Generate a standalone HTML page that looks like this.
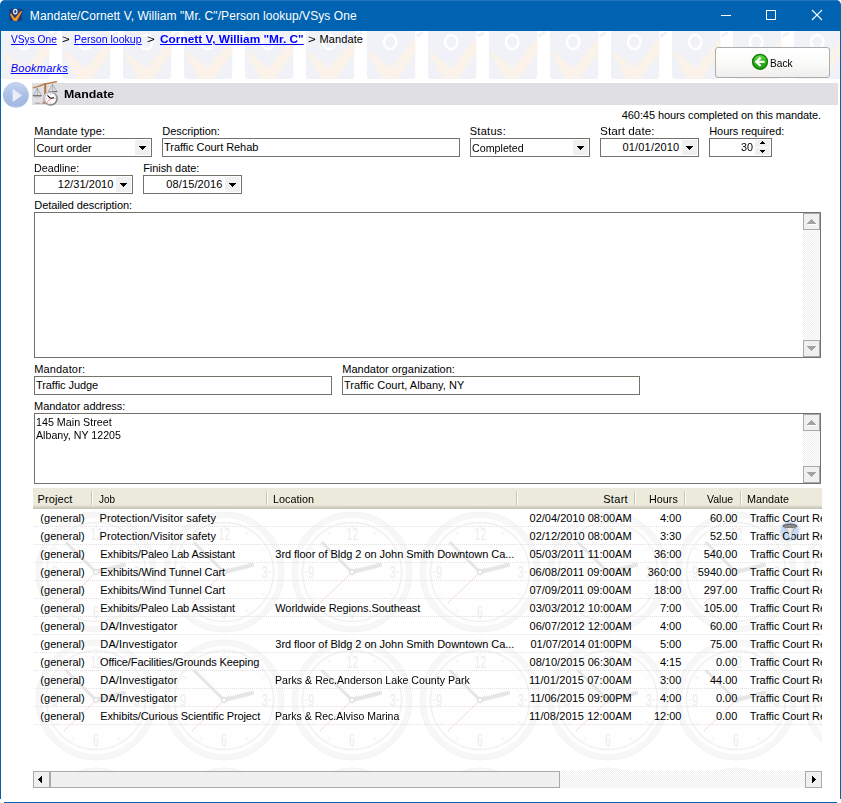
<!DOCTYPE html>
<html><head><meta charset="utf-8"><title>Mandate</title>
<style>
html,body{margin:0;padding:0;}
body{width:841px;height:803px;overflow:hidden;background:#fff;position:relative;font-family:"Liberation Sans",sans-serif;font-size:11px;color:#000;}
.a{position:absolute;}
.t{position:absolute;white-space:pre;line-height:13px;}
.box{position:absolute;box-sizing:border-box;border:1px solid #74736a;background:#fff;}
.dd{position:absolute;width:15px;height:15px;background:#f0f0f0;}
.dd i,.ar{position:absolute;display:block;background:#000;height:1px;}
.sb{position:absolute;box-sizing:border-box;width:17px;height:17px;background:#f0f0f0;border:1px solid #a9a9a9;}
.trk{position:absolute;background:repeating-conic-gradient(#efefef 0% 25%,#fff 0% 50%) 0 0/2px 2px;}
.hsep{position:absolute;top:491px;width:1px;height:14px;background:#c7c5b2;border-right:1px solid #fff;}
</style></head>
<body>
<!-- watermark band -->
<div class="a" id="wm" style="left:1px;top:31px;width:839px;height:49px;overflow:hidden;">
<svg width="839" height="49">
<defs><pattern id="vt" width="61" height="49" patternUnits="userSpaceOnUse">
<rect x="0" y="-6" width="48.3" height="53.9" rx="3.5" fill="#f0f2f7"/>
<path d="M2 19.5 L23.6 37 L46.5 9 L48.3 9.5 L48.3 22 L29.8 48 L15.7 48 L2.3 25 Z" fill="#fbf3e9"/>
<ellipse cx="23.2" cy="11" rx="6.2" ry="7.1" stroke="#fff" stroke-width="2.5" fill="none"/>
<path d="M49.5 5.2 L56 1.4" stroke="#eff1f6" stroke-width="3"/>
</pattern></defs>
<rect width="839" height="49" fill="url(#vt)"/>
</svg>
</div>
<!-- title bar -->
<div class="a" style="left:0;top:0;width:841px;height:31px;background:#0063b1;border-radius:5px 5px 0 0;"></div>
<div class="a" style="left:4px;top:0;width:833px;height:1px;background:#2273bb;"></div>
<svg class="a" style="left:8px;top:7px" width="18" height="16" viewBox="0 0 18 16">
<rect x="1.3" y="1.8" width="12.8" height="12.2" rx="1" fill="#1f3b78"/>
<path d="M13.8 4.6 L16.8 1.3" stroke="#22407c" stroke-width="0.9"/>
<path d="M1.8 7.3 L3.3 6.6 L6.9 11.2 L12.9 4 L14.2 4.3 L8.8 14 L5.7 14 Z" fill="#f7941d"/>
<ellipse cx="7.3" cy="4.6" rx="1.75" ry="2.3" fill="#2a3f74" stroke="#f2f2f7" stroke-width="1.15"/>
</svg>
<div class="a" style="left:721px;top:15px;width:10px;height:1px;background:#fff;"></div>
<div class="a" style="left:766px;top:10px;width:10px;height:10px;box-sizing:border-box;border:1px solid #fff;"></div>
<svg class="a" style="left:811px;top:9px" width="12" height="12" viewBox="0 0 12 12"><path d="M1 1 L11 11 M11 1 L1 11" stroke="#fff" stroke-width="1.1" fill="none"/></svg>
<!-- window borders -->
<div class="a" style="left:0;top:31px;width:1px;height:768px;background:#0063b1;"></div>
<div class="a" style="left:840px;top:31px;width:1px;height:768px;background:#0063b1;"></div>
<div class="a" style="left:4px;top:802px;width:833px;height:1px;background:#0063b1;"></div>

<!-- back button -->
<div class="a" style="left:715px;top:47px;width:115px;height:31px;box-sizing:border-box;border:1px solid #adadad;border-radius:3px;background:linear-gradient(#ffffff 0%,#fbfbfa 50%,#efeeec 100%);"></div>
<svg class="a" style="left:751px;top:53px" width="18" height="18" viewBox="0 0 18 18">
<defs><linearGradient id="gg" x1="0" y1="0" x2="0" y2="1"><stop offset="0" stop-color="#74da52"/><stop offset="0.45" stop-color="#31b41d"/><stop offset="1" stop-color="#1d9c10"/></linearGradient></defs>
<circle cx="9" cy="8.8" r="7.4" fill="url(#gg)" stroke="#17820f" stroke-width="1.5"/>
<path d="M9.6 4.6 L5.2 8.8 L9.6 13" fill="none" stroke="#fff" stroke-width="2.3" stroke-linejoin="miter"/>
<path d="M6 8.8 L13.6 8.8" stroke="#fff" stroke-width="2.2"/>
</svg>

<!-- section header -->
<div class="a" style="left:32px;top:83px;width:806px;height:22px;background:#e0dfe3;"></div>
<svg class="a" style="left:2px;top:81px" width="28" height="28" viewBox="0 0 28 28">
<defs><linearGradient id="pg" x1="0" y1="0" x2="0" y2="1"><stop offset="0" stop-color="#c6d4ef"/><stop offset="0.55" stop-color="#a9bee5"/><stop offset="0.9" stop-color="#a3b9e3"/><stop offset="1" stop-color="#c4d3ee"/></linearGradient>
<filter id="bl" x="-20%" y="-20%" width="140%" height="140%"><feGaussianBlur stdDeviation="0.45"/></filter></defs>
<circle cx="13.9" cy="14" r="12.9" fill="url(#pg)"/>
<path d="M11 8.6 L19.6 14.5 L11 20.4 Z" fill="#e8edf8" stroke="#e8edf8" stroke-width="0.8" stroke-linejoin="round" filter="url(#bl)"/>
</svg>
<!-- scales icon -->
<svg class="a" style="left:32px;top:80px" width="28" height="28" viewBox="0 0 28 28">
<defs><linearGradient id="rim" x1="0" y1="0" x2="1" y2="1"><stop offset="0" stop-color="#d9d9de"/><stop offset="1" stop-color="#77777d"/></linearGradient></defs>
<ellipse cx="6" cy="23.2" rx="3.6" ry="0.8" fill="#aeadb3"/>
<path d="M1.5 7.7 C5 7 9 5.5 13 3.9 C17 3 20.5 2.7 24.4 1.7" stroke="#b9804d" stroke-width="1.5" fill="none" stroke-linecap="round"/>
<path d="M13.2 3.4 L13.2 15.5" stroke="#b57743" stroke-width="2.1" fill="none"/>
<path d="M12.5 15 L12.3 22.8" stroke="#b57743" stroke-width="1.5" fill="none"/>
<path d="M10.4 23.1 L14 23.1" stroke="#a8652f" stroke-width="1.2"/>
<path d="M5.3 8 L1.3 15.5 M5.3 8 L9.3 15.5 M5.3 8 L5.3 15.4" stroke="#8a8a8e" stroke-width="0.55" fill="none"/>
<path d="M0.9 15.7 L9.7 15.7" stroke="#55555a" stroke-width="0.9"/>
<path d="M1.8 16.4 Q5.3 17.6 8.8 16.4" stroke="#8a8a8e" stroke-width="0.6" fill="none"/>
<path d="M20.6 4.4 L16.5 11.4 M20.6 4.4 L24.9 11.4 M20.6 4.4 L20.6 11.2" stroke="#8a8a8e" stroke-width="0.55" fill="none"/>
<path d="M16.1 11.6 L25.4 11.6" stroke="#55555a" stroke-width="0.9"/>
<circle cx="18.6" cy="18.5" r="6.4" fill="#fff" stroke="url(#rim)" stroke-width="1.8"/>
<path d="M18.6 13.6 v1 M18.6 22.4 v1 M13.7 18.5 h1 M22.5 18.5 h1" stroke="#d9534f" stroke-width="0.7"/>
<path d="M18.6 18.5 L15.4 15.4" stroke="#111" stroke-width="1.1" fill="none"/>
<path d="M18.6 18.5 L21.9 17.6" stroke="#111" stroke-width="1.1" fill="none"/>
<path d="M19.4 17.7 L14.9 22.7" stroke="#e8413a" stroke-width="0.7"/>
</svg>

<!-- row 1 fields -->
<div class="box" style="left:34px;top:138px;width:118px;height:19px;"><div class="dd" style="left:100px;top:1px"><i style="left:4px;top:6px;width:7px"></i><i style="left:5px;top:7px;width:5px"></i><i style="left:6px;top:8px;width:3px"></i><i style="left:7px;top:9px;width:1px"></i></div></div>
<div class="box" style="left:162px;top:138px;width:298px;height:19px;"></div>
<div class="box" style="left:470px;top:138px;width:120px;height:19px;"><div class="dd" style="left:102px;top:1px"><i style="left:4px;top:6px;width:7px"></i><i style="left:5px;top:7px;width:5px"></i><i style="left:6px;top:8px;width:3px"></i><i style="left:7px;top:9px;width:1px"></i></div></div>
<div class="box" style="left:600px;top:138px;width:99px;height:19px;"><div class="dd" style="left:81px;top:1px"><i style="left:4px;top:6px;width:7px"></i><i style="left:5px;top:7px;width:5px"></i><i style="left:6px;top:8px;width:3px"></i><i style="left:7px;top:9px;width:1px"></i></div></div>
<div class="box" style="left:709px;top:138px;width:63px;height:19px;">
 <div class="a" style="left:45px;top:1px;width:15px;height:7px;background:#f0f0f0"></div>
 <div class="a" style="left:45px;top:9px;width:15px;height:7px;background:#f0f0f0"></div>
 <i class="ar" style="left:52px;top:2px;width:1px;background:#000"></i><i class="ar" style="left:51px;top:3px;width:3px;background:#000"></i><i class="ar" style="left:50px;top:4px;width:5px;background:#000"></i><i class="ar" style="left:50px;top:11px;width:5px;background:#000"></i><i class="ar" style="left:51px;top:12px;width:3px;background:#000"></i><i class="ar" style="left:52px;top:13px;width:1px;background:#000"></i>
</div>
<!-- row 2 fields -->
<div class="box" style="left:34px;top:175px;width:99px;height:19px;"><div class="dd" style="left:81px;top:1px"><i style="left:4px;top:6px;width:7px"></i><i style="left:5px;top:7px;width:5px"></i><i style="left:6px;top:8px;width:3px"></i><i style="left:7px;top:9px;width:1px"></i></div></div>
<div class="box" style="left:143px;top:175px;width:99px;height:19px;"><div class="dd" style="left:81px;top:1px"><i style="left:4px;top:6px;width:7px"></i><i style="left:5px;top:7px;width:5px"></i><i style="left:6px;top:8px;width:3px"></i><i style="left:7px;top:9px;width:1px"></i></div></div>
<!-- textarea 1 -->
<div class="box" style="left:34px;top:212px;width:787px;height:146px;">
 <div class="trk" style="left:768px;top:0;width:17px;height:144px;"></div>
 <div class="sb" style="left:768px;top:0px;"><i class="ar" style="left:4px;top:10px;width:9px;background:#fff"></i><i class="ar" style="left:7px;top:5px;width:1px;background:#a2a2a2"></i><i class="ar" style="left:6px;top:6px;width:3px;background:#a2a2a2"></i><i class="ar" style="left:5px;top:7px;width:5px;background:#a2a2a2"></i><i class="ar" style="left:4px;top:8px;width:7px;background:#a2a2a2"></i><i class="ar" style="left:3px;top:9px;width:9px;background:#a2a2a2"></i></div>
 <div class="sb" style="left:768px;top:127px;"><i class="ar" style="left:8px;top:10px;width:1px;background:#fff"></i><i class="ar" style="left:3px;top:5px;width:9px;background:#a2a2a2"></i><i class="ar" style="left:4px;top:6px;width:7px;background:#a2a2a2"></i><i class="ar" style="left:5px;top:7px;width:5px;background:#a2a2a2"></i><i class="ar" style="left:6px;top:8px;width:3px;background:#a2a2a2"></i><i class="ar" style="left:7px;top:9px;width:1px;background:#a2a2a2"></i></div>
</div>
<!-- mandator -->
<div class="box" style="left:34px;top:376px;width:298px;height:19px;"></div>
<div class="box" style="left:342px;top:376px;width:298px;height:19px;"></div>
<!-- textarea 2 -->
<div class="box" style="left:34px;top:413px;width:787px;height:71px;">
 <div class="trk" style="left:768px;top:0;width:17px;height:69px;"></div>
 <div class="sb" style="left:768px;top:0px;"><i class="ar" style="left:4px;top:10px;width:9px;background:#fff"></i><i class="ar" style="left:7px;top:5px;width:1px;background:#a2a2a2"></i><i class="ar" style="left:6px;top:6px;width:3px;background:#a2a2a2"></i><i class="ar" style="left:5px;top:7px;width:5px;background:#a2a2a2"></i><i class="ar" style="left:4px;top:8px;width:7px;background:#a2a2a2"></i><i class="ar" style="left:3px;top:9px;width:9px;background:#a2a2a2"></i></div>
 <div class="sb" style="left:768px;top:52px;"><i class="ar" style="left:8px;top:10px;width:1px;background:#fff"></i><i class="ar" style="left:3px;top:5px;width:9px;background:#a2a2a2"></i><i class="ar" style="left:4px;top:6px;width:7px;background:#a2a2a2"></i><i class="ar" style="left:5px;top:7px;width:5px;background:#a2a2a2"></i><i class="ar" style="left:6px;top:8px;width:3px;background:#a2a2a2"></i><i class="ar" style="left:7px;top:9px;width:1px;background:#a2a2a2"></i></div>
</div>

<!-- list view -->
<div class="a" id="list" style="left:32px;top:508px;width:790px;height:263px;overflow:hidden;">
<svg width="790" height="263">
<defs><pattern id="ck" width="128" height="128" patternUnits="userSpaceOnUse">
<circle cx="64" cy="64" r="57" fill="#fefefe" stroke="#f7f7f7" stroke-width="6"/>
<circle cx="64" cy="64" r="60" fill="none" stroke="#f1f1f1" stroke-width="0.8"/>
<circle cx="64" cy="64" r="49.5" fill="none" stroke="#f1f1f1" stroke-width="1.4"/>
<circle cx="64" cy="64" r="45.5" fill="none" stroke="#f1f1f1" stroke-width="4" stroke-dasharray="1 22.823" transform="rotate(-1 64 64)"/>
<g font-family="Liberation Sans, sans-serif" font-size="17" fill="#ececec" text-anchor="middle"><text x="104.0" y="32.3" transform="scale(0.62 1)">12</text><text x="168.7" y="70.2" transform="scale(0.62 1)">3</text><text x="103.2" y="110" transform="scale(0.62 1)">6</text><text x="37.4" y="70.2" transform="scale(0.62 1)">9</text></g>
<path d="M64 64 L34.5 35" stroke="#e6e6e6" stroke-width="3" stroke-linecap="round"/>
<path d="M64 64 L92 57" stroke="#e6e6e6" stroke-width="4.2" stroke-linecap="round"/>
<path d="M69 59.5 L32 95" stroke="#f8d4d4" stroke-width="0.9"/>
<circle cx="64" cy="64" r="2.3" fill="#fff" stroke="#e0e0e0" stroke-width="1.2"/>
</pattern>
<pattern id="dots" width="2" height="18" patternUnits="userSpaceOnUse"><rect x="0" y="0" width="1" height="1" fill="#e1e1e1"/></pattern>
</defs>
<rect width="790" height="263" fill="url(#ck)"/>
<rect x="1" y="18" width="789" height="199" fill="url(#dots)"/>
</svg>
</div>
<!-- list header -->
<div class="a" style="left:33px;top:488px;width:789px;height:21px;background:linear-gradient(#ebeadb 0,#ebeadb 17px,#e2dece 18px,#d6d2c2 19px,#cbc7b8 20px,#cbc7b8 21px);"></div>
<div class="hsep" style="left:91px"></div>
<div class="hsep" style="left:266px"></div>
<div class="hsep" style="left:516px"></div>
<div class="hsep" style="left:634px"></div>
<div class="hsep" style="left:684px"></div>
<div class="hsep" style="left:740px"></div>
<!-- horizontal scrollbar -->
<div class="trk" style="left:33px;top:771px;width:789px;height:17px;"></div>
<div class="a" style="left:50px;top:771px;width:510px;height:17px;box-sizing:border-box;background:#f0f0f0;border:1px solid #a9a9a9;"></div>
<div class="sb" style="left:33px;top:771px;"></div><i class="ar" style="left:38px;top:779px;width:1px;height:1px;background:#000"></i><i class="ar" style="left:39px;top:778px;width:1px;height:3px;background:#000"></i><i class="ar" style="left:40px;top:777px;width:1px;height:5px;background:#000"></i><i class="ar" style="left:41px;top:776px;width:1px;height:7px;background:#000"></i>
<div class="sb" style="left:805px;top:771px;"></div><i class="ar" style="left:812px;top:776px;width:1px;height:7px;background:#000"></i><i class="ar" style="left:813px;top:777px;width:1px;height:5px;background:#000"></i><i class="ar" style="left:814px;top:778px;width:1px;height:3px;background:#000"></i><i class="ar" style="left:815px;top:779px;width:1px;height:1px;background:#000"></i>

<svg class="a" style="left:777px;top:518px" width="26" height="26" viewBox="0 0 26 26">
<defs><radialGradient id="fg" cx="0.5" cy="0.5" r="0.5"><stop offset="0" stop-color="#c4d7f3"/><stop offset="0.7" stop-color="#c9daf4"/><stop offset="1" stop-color="#dce8f9" stop-opacity="0"/></radialGradient></defs>
<circle cx="12.8" cy="13" r="11.8" fill="url(#fg)"/></svg>
<span class="t" style="left:29.85px;top:10px;font-size:12px;letter-spacing:0.07px;color:#fff;">Mandate/Cornett V, William "Mr. C"/Person lookup/VSys One</span>
<span class="t" style="left:11.11px;top:33px;color:#0000ff;text-decoration:underline;transform:scaleX(0.9254);transform-origin:0 0;">VSys One</span>
<span class="t" style="left:62.10px;top:33px;transform:scaleX(1.2071);transform-origin:0 0;">&gt;</span>
<span class="t" style="left:74.21px;top:33px;color:#0000ff;text-decoration:underline;transform:scaleX(0.9618);transform-origin:0 0;">Person lookup</span>
<span class="t" style="left:147.10px;top:33px;transform:scaleX(1.2071);transform-origin:0 0;">&gt;</span>
<span class="t" style="left:159.89px;top:33px;font-weight:bold;color:#0000ff;text-decoration:underline;transform:scaleX(1.0771);transform-origin:0 0;">Cornett V, William "Mr. C"</span>
<span class="t" style="left:308.10px;top:33px;transform:scaleX(1.2071);transform-origin:0 0;">&gt;</span>
<span class="t" style="left:319.60px;top:33px;letter-spacing:0.08px;">Mandate</span>
<span class="t" style="left:10.78px;top:62px;font-style:italic;letter-spacing:0.25px;color:#0000ff;text-decoration:underline;">Bookmarks</span>
<span class="t" style="left:770.05px;top:57px;transform:scaleX(0.9245);transform-origin:0 0;">Back</span>
<span class="t" style="left:64.10px;top:88px;font-weight:bold;transform:scaleX(1.1233);transform-origin:0 0;">Mandate</span>
<span class="t" style="left:621.77px;top:109px;letter-spacing:-0.08px;">460:45 hours completed on this mandate.</span>
<span class="t" style="left:34.21px;top:125px;letter-spacing:0.10px;">Mandate type:</span>
<span class="t" style="left:162.33px;top:125px;letter-spacing:-0.05px;">Description:</span>
<span class="t" style="left:469.71px;top:125px;letter-spacing:0.29px;">Status:</span>
<span class="t" style="left:599.71px;top:125px;transform:scaleX(1.0758);transform-origin:0 0;">Start date:</span>
<span class="t" style="left:709.21px;top:125px;letter-spacing:-0.05px;">Hours required:</span>
<span class="t" style="left:33.99px;top:162px;transform:scaleX(0.9736);transform-origin:0 0;">Deadline:</span>
<span class="t" style="left:143.21px;top:162px;letter-spacing:-0.07px;">Finish date:</span>
<span class="t" style="left:34.32px;top:199px;letter-spacing:-0.10px;">Detailed description:</span>
<span class="t" style="left:34.21px;top:363px;letter-spacing:0.16px;">Mandator:</span>
<span class="t" style="left:342.21px;top:363px;letter-spacing:0.01px;">Mandator organization:</span>
<span class="t" style="left:33.99px;top:400px;letter-spacing:-0.02px;">Mandator address:</span>
<span class="t" style="left:36.44px;top:142px;letter-spacing:-0.03px;">Court order</span>
<span class="t" style="left:164.05px;top:141px;letter-spacing:-0.06px;">Traffic Court Rehab</span>
<span class="t" style="left:472.10px;top:142px;transform:scaleX(0.9721);transform-origin:0 0;">Completed</span>
<span class="t" style="left:622.44px;top:141px;letter-spacing:0.19px;">01/01/2010</span>
<span class="t" style="left:740.66px;top:141px;transform:scaleX(0.9837);transform-origin:0 0;">30</span>
<span class="t" style="left:57.69px;top:178px;letter-spacing:0.07px;">12/31/2010</span>
<span class="t" style="left:166.32px;top:178px;letter-spacing:0.11px;">08/15/2016</span>
<span class="t" style="left:35.94px;top:379px;letter-spacing:-0.06px;">Traffic Judge</span>
<span class="t" style="left:343.94px;top:379px;letter-spacing:0.03px;">Traffic Court, Albany, NY</span>
<span class="t" style="left:35.88px;top:416px;transform:scaleX(0.9748);transform-origin:0 0;">145 Main Street</span>
<span class="t" style="left:36.16px;top:429px;transform:scaleX(0.9689);transform-origin:0 0;">Albany, NY 12205</span>
<span class="t" style="left:37.60px;top:493px;letter-spacing:0.08px;">Project</span>
<span class="t" style="left:99.11px;top:493px;transform:scaleX(0.9049);transform-origin:0 0;">Job</span>
<span class="t" style="left:273.16px;top:493px;transform:scaleX(0.9842);transform-origin:0 0;">Location</span>
<span class="t" style="left:603.21px;top:493px;letter-spacing:0.31px;">Start</span>
<span class="t" style="left:648.60px;top:493px;transform:scaleX(0.9833);transform-origin:0 0;">Hours</span>
<span class="t" style="left:707.39px;top:493px;transform:scaleX(0.9577);transform-origin:0 0;">Value</span>
<span class="t" style="left:746.99px;top:493px;transform:scaleX(0.9835);transform-origin:0 0;">Mandate</span>
<span class="t" style="left:40.32px;top:512px;letter-spacing:0.05px;">(general)</span>
<span class="t" style="left:99.60px;top:512px;letter-spacing:0.04px;">Protection/Visitor safety</span>
<span class="t" style="left:529.55px;top:512px;">02/04/2010 08:00AM</span>
<span class="t" style="left:659.90px;top:512px;">4:00</span>
<span class="t" style="left:709.90px;top:512px;">60.00</span>
<span class="t" style="left:749.74px;top:512px;letter-spacing:-0.05px;width:72.26px;overflow:hidden;">Traffic Court Re</span>
<span class="t" style="left:40.32px;top:530px;letter-spacing:0.05px;">(general)</span>
<span class="t" style="left:99.60px;top:530px;letter-spacing:0.04px;">Protection/Visitor safety</span>
<span class="t" style="left:529.55px;top:530px;">02/12/2010 08:00AM</span>
<span class="t" style="left:659.90px;top:530px;">3:30</span>
<span class="t" style="left:709.90px;top:530px;">52.50</span>
<span class="t" style="left:749.74px;top:530px;letter-spacing:-0.05px;width:72.26px;overflow:hidden;">Traffic Court Re</span>
<span class="t" style="left:40.32px;top:548px;letter-spacing:0.05px;">(general)</span>
<span class="t" style="left:100.33px;top:548px;letter-spacing:-0.13px;">Exhibits/Paleo Lab Assistant</span>
<span class="t" style="left:275.32px;top:548px;letter-spacing:-0.04px;">3rd floor of Bldg 2 on John Smith Downtown Ca...</span>
<span class="t" style="left:529.44px;top:548px;letter-spacing:0.10px;">05/03/2011 11:00AM</span>
<span class="t" style="left:653.90px;top:548px;">36:00</span>
<span class="t" style="left:703.67px;top:548px;">540.00</span>
<span class="t" style="left:749.74px;top:548px;letter-spacing:-0.05px;width:72.26px;overflow:hidden;">Traffic Court Re</span>
<span class="t" style="left:40.32px;top:566px;letter-spacing:0.05px;">(general)</span>
<span class="t" style="left:100.21px;top:566px;letter-spacing:-0.07px;">Exhibits/Wind Tunnel Cart</span>
<span class="t" style="left:529.44px;top:566px;letter-spacing:0.04px;">06/08/2011 09:00AM</span>
<span class="t" style="left:647.67px;top:566px;">360:00</span>
<span class="t" style="left:697.68px;top:566px;">5940.00</span>
<span class="t" style="left:749.74px;top:566px;letter-spacing:-0.05px;width:72.26px;overflow:hidden;">Traffic Court Re</span>
<span class="t" style="left:40.32px;top:584px;letter-spacing:0.05px;">(general)</span>
<span class="t" style="left:100.21px;top:584px;letter-spacing:-0.07px;">Exhibits/Wind Tunnel Cart</span>
<span class="t" style="left:529.44px;top:584px;letter-spacing:0.04px;">07/09/2011 09:00AM</span>
<span class="t" style="left:653.90px;top:584px;">18:00</span>
<span class="t" style="left:703.67px;top:584px;">297.00</span>
<span class="t" style="left:749.74px;top:584px;letter-spacing:-0.05px;width:72.26px;overflow:hidden;">Traffic Court Re</span>
<span class="t" style="left:40.32px;top:602px;letter-spacing:0.05px;">(general)</span>
<span class="t" style="left:100.33px;top:602px;letter-spacing:-0.13px;">Exhibits/Paleo Lab Assistant</span>
<span class="t" style="left:275.27px;top:602px;letter-spacing:-0.08px;">Worldwide Regions.Southeast</span>
<span class="t" style="left:529.55px;top:602px;">03/03/2012 10:00AM</span>
<span class="t" style="left:659.90px;top:602px;">7:00</span>
<span class="t" style="left:703.67px;top:602px;">105.00</span>
<span class="t" style="left:749.74px;top:602px;letter-spacing:-0.05px;width:72.26px;overflow:hidden;">Traffic Court Re</span>
<span class="t" style="left:40.32px;top:620px;letter-spacing:0.05px;">(general)</span>
<span class="t" style="left:100.32px;top:620px;letter-spacing:0.14px;">DA/Investigator</span>
<span class="t" style="left:529.55px;top:620px;">06/07/2012 12:00AM</span>
<span class="t" style="left:659.90px;top:620px;">4:00</span>
<span class="t" style="left:709.90px;top:620px;">60.00</span>
<span class="t" style="left:749.74px;top:620px;letter-spacing:-0.05px;width:72.26px;overflow:hidden;">Traffic Court Re</span>
<span class="t" style="left:40.32px;top:638px;letter-spacing:0.05px;">(general)</span>
<span class="t" style="left:100.32px;top:638px;letter-spacing:0.14px;">DA/Investigator</span>
<span class="t" style="left:275.32px;top:638px;letter-spacing:-0.04px;">3rd floor of Bldg 2 on John Smith Downtown Ca...</span>
<span class="t" style="left:530.55px;top:638px;letter-spacing:-0.06px;">01/07/2014 01:00PM</span>
<span class="t" style="left:659.90px;top:638px;">5:00</span>
<span class="t" style="left:709.90px;top:638px;">75.00</span>
<span class="t" style="left:749.74px;top:638px;letter-spacing:-0.05px;width:72.26px;overflow:hidden;">Traffic Court Re</span>
<span class="t" style="left:40.32px;top:656px;letter-spacing:0.05px;">(general)</span>
<span class="t" style="left:100.05px;top:656px;letter-spacing:-0.12px;">Office/Facilities/Grounds Keeping</span>
<span class="t" style="left:529.55px;top:656px;">08/10/2015 06:30AM</span>
<span class="t" style="left:659.90px;top:656px;">4:15</span>
<span class="t" style="left:715.90px;top:656px;">0.00</span>
<span class="t" style="left:749.74px;top:656px;letter-spacing:-0.05px;width:72.26px;overflow:hidden;">Traffic Court Re</span>
<span class="t" style="left:40.32px;top:674px;letter-spacing:0.05px;">(general)</span>
<span class="t" style="left:100.32px;top:674px;letter-spacing:0.14px;">DA/Investigator</span>
<span class="t" style="left:274.88px;top:674px;transform:scaleX(0.9654);transform-origin:0 0;">Parks &amp; Rec.Anderson Lake County Park</span>
<span class="t" style="left:528.88px;top:674px;letter-spacing:0.09px;">11/01/2015 07:00AM</span>
<span class="t" style="left:659.90px;top:674px;">3:00</span>
<span class="t" style="left:709.90px;top:674px;">44.00</span>
<span class="t" style="left:749.74px;top:674px;letter-spacing:-0.05px;width:72.26px;overflow:hidden;">Traffic Court Re</span>
<span class="t" style="left:40.32px;top:692px;letter-spacing:0.05px;">(general)</span>
<span class="t" style="left:100.32px;top:692px;letter-spacing:0.14px;">DA/Investigator</span>
<span class="t" style="left:529.88px;top:692px;letter-spacing:0.03px;">11/06/2015 09:00PM</span>
<span class="t" style="left:659.90px;top:692px;">4:00</span>
<span class="t" style="left:715.90px;top:692px;">0.00</span>
<span class="t" style="left:749.74px;top:692px;letter-spacing:-0.05px;width:72.26px;overflow:hidden;">Traffic Court Re</span>
<span class="t" style="left:40.32px;top:710px;letter-spacing:0.05px;">(general)</span>
<span class="t" style="left:100.21px;top:710px;letter-spacing:-0.11px;">Exhibits/Curious Scientific Project</span>
<span class="t" style="left:275.10px;top:710px;transform:scaleX(0.9543);transform-origin:0 0;">Parks &amp; Rec.Alviso Marina</span>
<span class="t" style="left:528.88px;top:710px;letter-spacing:0.09px;">11/08/2015 12:00AM</span>
<span class="t" style="left:653.90px;top:710px;">12:00</span>
<span class="t" style="left:715.90px;top:710px;">0.00</span>
<span class="t" style="left:749.74px;top:710px;letter-spacing:-0.05px;width:72.26px;overflow:hidden;">Traffic Court Re</span>
<!-- funnel -->
<svg class="a" style="left:777px;top:518px" width="26" height="26" viewBox="0 0 26 26">
<defs><linearGradient id="fc" x1="0" y1="0" x2="1" y2="0"><stop offset="0" stop-color="#b9b9b9"/><stop offset="0.5" stop-color="#f2f2f2"/><stop offset="1" stop-color="#a8a8a8"/></linearGradient></defs>
<path d="M5.6 8 L20.2 8 L14.9 14.6 L14.9 19.8 L11.8 19.8 L11.8 14.6 Z" fill="url(#fc)" stroke="#a2a2a2" stroke-width="0.5"/>
<ellipse cx="12.9" cy="7.8" rx="7.4" ry="2.3" fill="#6b6b6b"/>
<ellipse cx="12.9" cy="8.2" rx="5.6" ry="1.3" fill="#8d8d8d"/>
</svg>

</body></html>
